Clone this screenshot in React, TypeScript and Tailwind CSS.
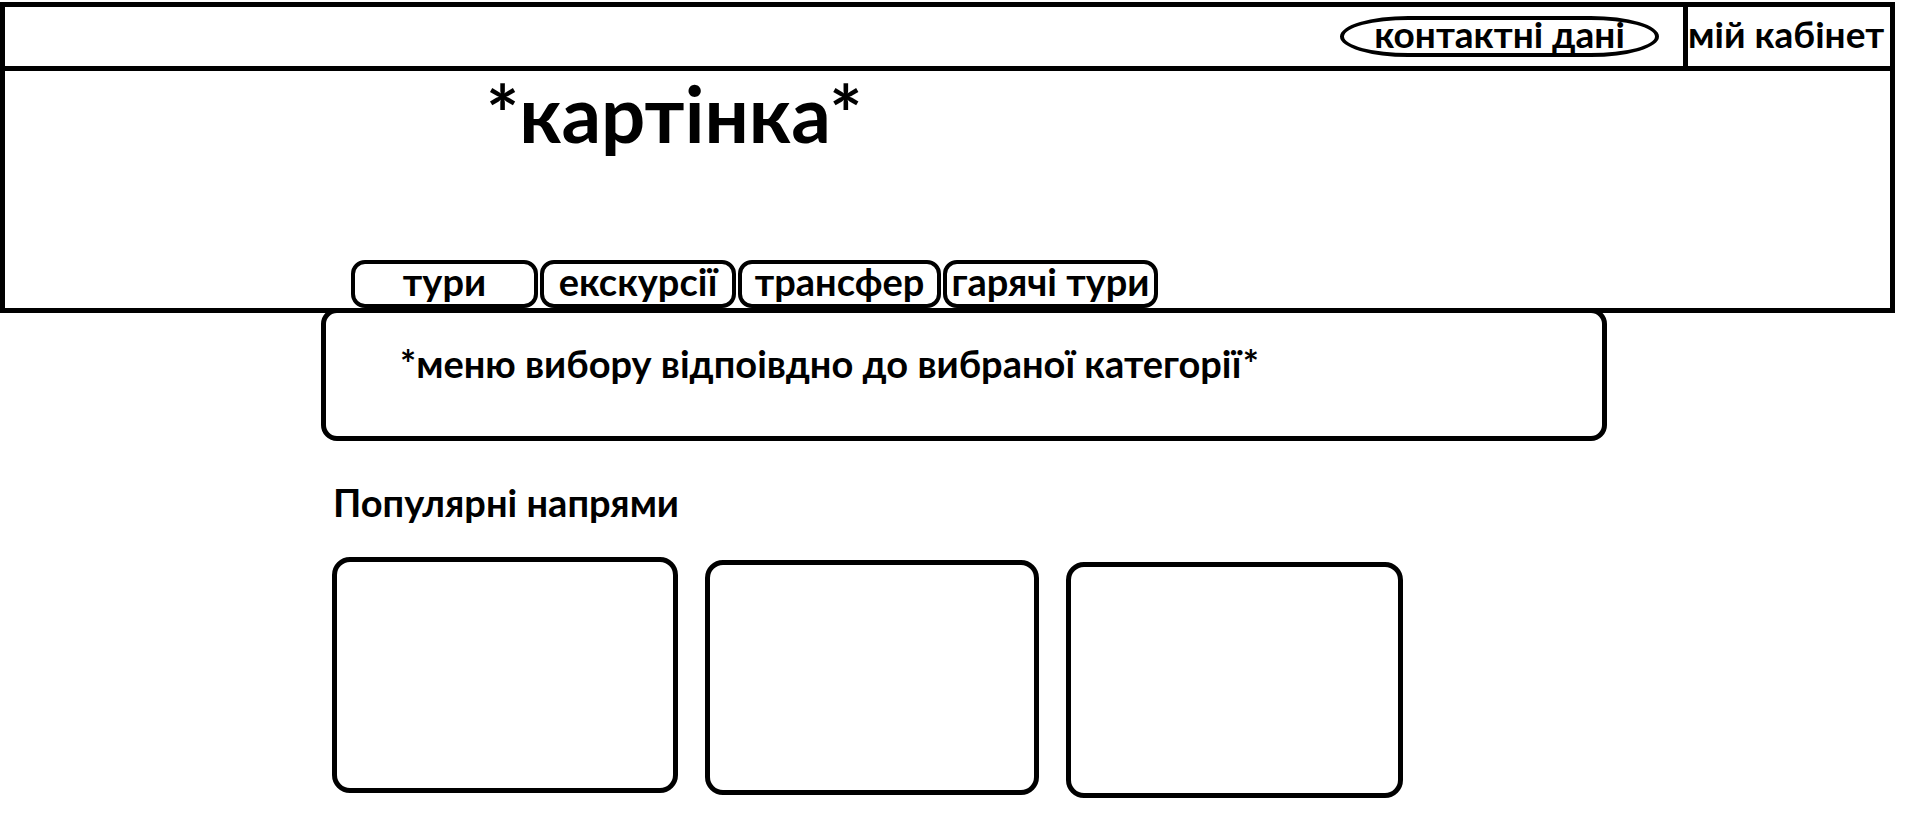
import React from "react";

const tabs = [
  { label: "тури", w: "w-[187px]" },
  { label: "екскурсії", w: "w-[196px]" },
  { label: "трансфер", w: "w-[203px]" },
  { label: "гарячі тури", w: "w-[215px]" },
];

function TopBar() {
  return (
    <div className="flex h-[64px] items-stretch justify-end border-b-[5px] border-black">
      <div className="flex items-center">
        <div className="flex h-[41px] w-[319px] items-center justify-center rounded-[70px/21px] border-[4px] border-black pb-[6px]">
          <span className="text-[37px] font-bold leading-none">контактні дані</span>
        </div>
      </div>
      <div className="ml-[24px] flex w-[207px] items-center border-l-[5px] border-black pb-[6px]">
        <span className="text-[37px] font-bold leading-none">мій кабінет</span>
      </div>
    </div>
  );
}

function Hero() {
  return (
    <div className="flex h-[237px] flex-col justify-between">
      <div className="pl-[481px] pt-[3px]">
        <span className="text-[78px] font-bold leading-none">*картінка*</span>
      </div>
      <div className="flex gap-[2px] pl-[346px]">
        {tabs.map((t) => (
          <div
            key={t.label}
            className={`${t.w} flex h-[48px] items-center justify-center rounded-[14px] border-[4px] border-black pb-[6px]`}
          >
            <span className="text-[38px] font-bold leading-none">{t.label}</span>
          </div>
        ))}
      </div>
    </div>
  );
}

export default function App() {
  return (
    <div className="min-h-screen bg-white pt-[2px] font-['Lato','Open_Sans',sans-serif] text-black">
      <div className="w-[1895px] border-[5px] border-black">
        <TopBar />
        <Hero />
      </div>

      <div className="-mt-[5px] ml-[321px] h-[133px] w-[1286px] rounded-[16px] border-[5px] border-black pl-[74px] pt-[31px]">
        <span className="text-[38px] font-bold leading-none">
          *меню вибору відпоівдно до вибраної категорії*
        </span>
      </div>

      <h2 className="ml-[333px] mt-[42px] text-[38px] font-bold leading-none">Популярні напрями</h2>

      <div className="ml-[332px] mt-[36px] flex items-start gap-[27px]">
        <div className="h-[236px] w-[346px] rounded-[18px] border-[5px] border-black" />
        <div className="mt-[3px] h-[235px] w-[334px] rounded-[18px] border-[5px] border-black" />
        <div className="mt-[5px] h-[236px] w-[337px] rounded-[18px] border-[5px] border-black" />
      </div>
    </div>
  );
}
